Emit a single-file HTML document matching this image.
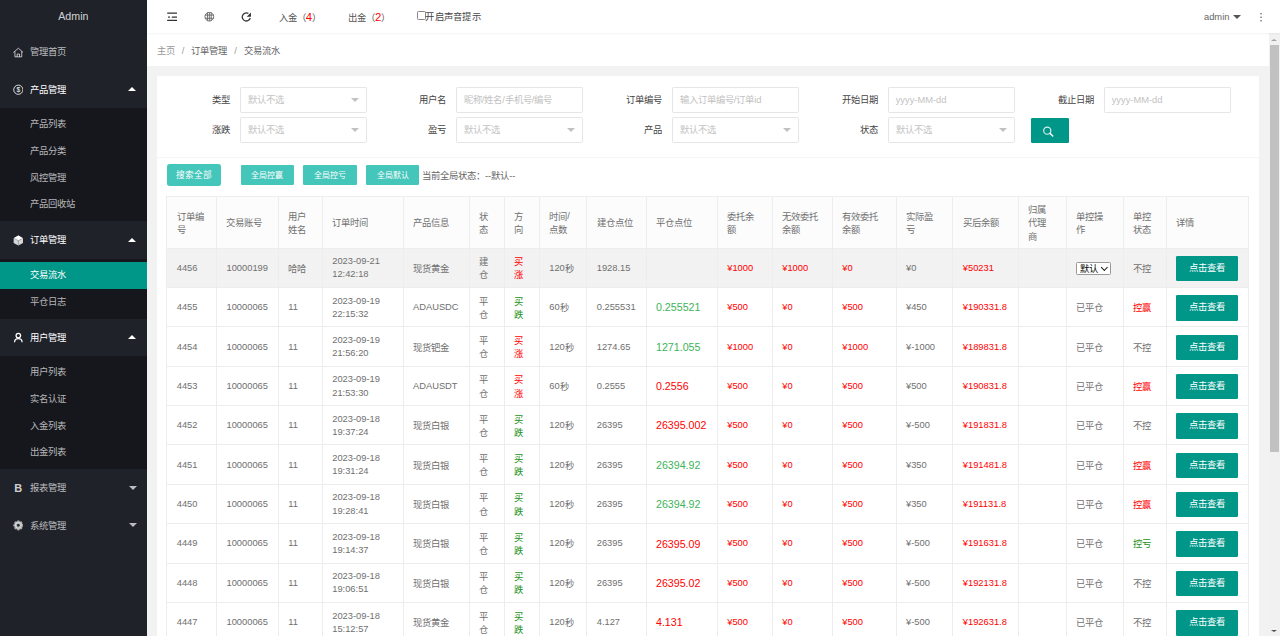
<!DOCTYPE html>
<html lang="zh-CN">
<head>
<meta charset="utf-8">
<title>Admin</title>
<style>
html,body{margin:0;padding:0;width:1280px;height:636px;overflow:hidden;background:#f2f2f2;}
*{box-sizing:border-box;}
#app{position:absolute;left:0;top:0;width:1920px;height:954px;zoom:0.6666667;overflow:hidden;
  font-family:"Liberation Sans",sans-serif;font-size:14px;color:#333;background:#f2f2f2;}
/* sidebar */
.side{position:absolute;left:0;top:0;width:220px;height:954px;background:#20222A;}
.logo{position:absolute;left:0;top:0;width:220px;height:50px;line-height:50px;text-align:center;font-size:16px;color:rgba(255,255,255,.8);}
.nav{position:absolute;left:0;top:50px;width:220px;}
.ni{position:relative;height:56px;line-height:58px;padding-left:45px;color:rgba(255,255,255,.7);font-size:14px;}
.ni.on{color:#fff;}
.ni .ic{position:absolute;left:19px;top:20.5px;width:16px;height:16px;}
.ni .more{position:absolute;right:16px;top:50%;width:0;height:0;border:6px solid transparent;}
.ni .more.up{border-bottom-color:#fff;margin-top:-9px;}
.ni .more.dn{border-top-color:rgba(255,255,255,.7);margin-top:-3px;right:14.5px;}
.child{background:rgba(0,0,0,.3);padding:5px 0;}
.dd{height:40px;line-height:41px;padding-left:45px;color:rgba(255,255,255,.7);font-size:14px;}
.dd.this{background:#009688;color:#fff;}
/* header */
.hdr{position:absolute;left:220px;top:0;width:1700px;height:50px;background:#fff;box-shadow:0 1px 2px 0 rgba(0,0,0,.05);z-index:2;}
.hic{position:absolute;top:18.5px;width:16px;height:16px;}
.htx{position:absolute;top:1.5px;line-height:50px;color:#555;font-size:14px;white-space:nowrap;}
.htx b{font-weight:normal;color:#f00;font-size:17px;}
.cbx{position:absolute;left:406px;top:16.5px;width:12.5px;height:13px;border:1px solid #888;border-radius:2px;background:#fff;}
/* breadcrumb */
.crumb{position:absolute;left:220px;top:50px;width:1683px;height:49.4px;background:#fff;line-height:50px;padding-top:2.5px;padding-left:15px;font-size:14px;}
.crumb .a1{color:#999;}
.crumb .sep{color:#999;margin:0 10.5px;}
.crumb .a2{color:#666;}
/* scrollbar */
.sb{position:absolute;left:1903px;top:50px;width:17px;height:904px;background:#f1f1f1;}
.sb .th{position:absolute;left:2px;top:17.5px;width:13px;height:610.5px;background:#c1c1c1;}
.sb .up{position:absolute;left:4px;top:8px;width:0;height:0;border:4.5px solid transparent;border-bottom:4px solid #a3a3a3;border-top:0;}
.sb .dn{position:absolute;left:4px;bottom:6px;width:0;height:0;border:4.5px solid transparent;border-top:4px solid #505050;border-bottom:0;}
/* card */
.card{position:absolute;left:235px;top:114.4px;width:1653px;height:900px;background:#fff;border-radius:2px;}
.hline{position:absolute;left:235px;top:236px;width:1653px;height:1px;background:#f6f6f6;}
.flab{position:absolute;width:110px;height:38px;line-height:38px;margin-top:1.5px;padding-right:15px;text-align:right;color:#444;font-size:14px;}
.finp{position:absolute;width:190px;height:38px;line-height:36px;border:1px solid #e6e6e6;border-radius:2px;background:#fff;padding-left:10px;color:#c2c2c2;font-size:14px;white-space:nowrap;overflow:hidden;}
.finp .edge{position:absolute;right:10px;top:50%;margin-top:-3px;width:0;height:0;border:6px solid transparent;border-top-color:#c2c2c2;border-bottom:0;}
.sbtn{position:absolute;left:1546px;top:177px;width:57px;height:38px;background:#009688;border-radius:2px;}
.tbtn{position:absolute;top:247.5px;height:30px;line-height:31.5px;background:#44c6bb;color:#fff;text-align:center;font-size:12px;border-radius:2px;}
.tbtn.big{top:246.5px;height:32px;line-height:33.5px;font-size:13px;border-radius:4px;}
.gstate{position:absolute;left:633px;top:249px;line-height:30px;font-size:14px;color:#666;white-space:nowrap;}
/* table */
table.lt{position:absolute;left:249.6px;top:293.35px;width:1621.95px;table-layout:fixed;border-collapse:collapse;border-spacing:0;background:#fff;color:#707070;font-size:14px;}
.lt th,.lt td{border:1px solid #ededed;padding:9.8px 16px 7.8px 14px;line-height:20px;min-height:20px;text-align:left;font-weight:normal;word-break:break-all;}
.lt thead tr{background:#fcfcfc;} .lt th{padding-top:9.8px;padding-bottom:6.8px;}
.lt td{word-break:normal;}
.lt tr.hov{background:#f2f2f2;}
.z{position:relative;top:1.5px;}
.vbtn .z,.sel .z{top:0;}
.cr{color:#f00;}
.cg{color:#1a921a;}
.clg{color:#3cb35a;}
.big{font-size:16px;position:relative;top:1px;}
.vbtn{display:inline-block;width:92px;height:38px;line-height:38px;text-align:center;color:#fff;background:#009688;border-radius:2px;font-size:14px;vertical-align:middle;}
.sel{display:inline-block;position:relative;width:53px;height:20px;line-height:18px;border:1px solid #9a9a9a;border-radius:2px;background:#fff;color:#000;font-size:14px;padding-left:4px;vertical-align:middle;}
.sel i{position:absolute;right:6px;top:3.5px;width:7px;height:7px;border-right:2.8px solid #111;border-bottom:2.8px solid #111;transform:rotate(45deg);}
</style>
</head>
<body>
<div id="app">
  <div class="side">
    <div class="logo">Admin</div>
    <div class="nav">
      <div class="ni">
        <svg class="ic" viewBox="0 0 16 16"><path d="M0.6 8.3 L8 1.9 L15.4 8.3 M2.9 6.6 V14.8 H13.1 V6.6 M6.2 14.8 V10.6 H9.8 V14.8" fill="none" stroke="rgba(255,255,255,.7)" stroke-width="1.5" stroke-linejoin="round"/></svg>
        管理首页</div>
      <div class="ni on">
        <svg class="ic" viewBox="0 0 16 16"><circle cx="8" cy="8.6" r="6.9" fill="none" stroke="rgba(255,255,255,.9)" stroke-width="1.4"/><text x="8" y="12.4" font-size="10" text-anchor="middle" fill="#fff" font-family="Liberation Sans">$</text></svg>
        产品管理<span class="more up"></span></div>
      <div class="child">
        <div class="dd">产品列表</div>
        <div class="dd">产品分类</div>
        <div class="dd">风控管理</div>
        <div class="dd">产品回收站</div>
      </div>
      <div class="ni on">
        <svg class="ic" viewBox="0 0 16 16"><path d="M8 0.9 L15 4.7 V12 L8 15.8 L1 12 V4.7 Z" fill="rgba(255,255,255,.82)"/><path d="M8 0.9 L15 4.7 L8 8.3 L1 4.7 Z" fill="#fff"/><path d="M1.5 5 L8 8.4 L14.5 5 M8 8.4 V15.5" fill="none" stroke="#20222A" stroke-width="0.8" stroke-opacity=".55"/></svg>
        订单管理<span class="more up"></span></div>
      <div class="child">
        <div class="dd this">交易流水</div>
        <div class="dd">平仓日志</div>
      </div>
      <div class="ni on">
        <svg class="ic" viewBox="0 0 16 16"><circle cx="8" cy="5.3" r="3.4" fill="none" stroke="#fff" stroke-width="1.9"/><path d="M2.4 14.6 Q2.8 10 8 10 Q13.2 10 13.6 14.6" fill="none" stroke="#fff" stroke-width="1.9" stroke-linecap="round"/></svg>
        用户管理<span class="more up"></span></div>
      <div class="child">
        <div class="dd">用户列表</div>
        <div class="dd">实名认证</div>
        <div class="dd">入金列表</div>
        <div class="dd">出金列表</div>
      </div>
      <div class="ni">
        <svg class="ic" viewBox="0 0 16 16"><text x="2" y="14.2" font-size="16.5" font-weight="bold" fill="rgba(255,255,255,.8)" font-family="Liberation Sans">B</text></svg>
        报表管理<span class="more dn"></span></div>
      <div class="ni">
        <svg class="ic" viewBox="0 0 16 16"><g fill="rgba(255,255,255,.6)"><circle cx="8" cy="8" r="5"/><circle cx="8" cy="2.6" r="2.3"/><circle cx="8" cy="13.4" r="2.3"/><circle cx="2.6" cy="8" r="2.3"/><circle cx="13.4" cy="8" r="2.3"/><circle cx="4.2" cy="4.2" r="2.3"/><circle cx="11.8" cy="4.2" r="2.3"/><circle cx="4.2" cy="11.8" r="2.3"/><circle cx="11.8" cy="11.8" r="2.3"/></g><circle cx="8" cy="8" r="1.9" fill="#20222A"/></svg>
        系统管理<span class="more dn"></span></div>
    </div>
  </div>

  <div class="hdr">
    <svg class="hic" style="left:30px" viewBox="0 0 16 16"><g fill="#333"><rect x="0.2" y="0.8" width="15.4" height="1.7" rx="0.8"/><rect x="7" y="6.8" width="8.6" height="1.7" rx="0.8"/><rect x="0.2" y="11.7" width="15.4" height="1.7" rx="0.3"/><circle cx="3" cy="7.6" r="1.35"/></g></svg>
    <svg class="hic" style="left:86px" viewBox="0 0 16 16"><g fill="none" stroke="#555" stroke-width="1.2"><circle cx="8" cy="7" r="6.6"/><path d="M1.6 4.6 H14.4 M1.6 9.4 H14.4 M5.2 1 V13 M8 0.6 V13.4 M10.8 1 V13"/></g></svg>
    <svg class="hic" style="left:142px" viewBox="0 0 16 16"><path d="M13.9 9.0 A6.1 6.1 0 1 1 11.05 2.1" fill="none" stroke="#333" stroke-width="1.9"/><path d="M14.9 0.9 V7.3 H8.5 Z" fill="#333"/></svg>
    <div class="htx" style="left:198px">入金（<b>4</b>）</div>
    <div class="htx" style="left:302px">出金（<b>2</b>）</div>
    <div class="cbx"></div>
    <div class="htx" style="left:418px;color:#444;letter-spacing:0.4px">开启声音提示</div>
    <div class="htx" style="left:1586px;color:#666">admin</div>
    <span style="position:absolute;left:1629px;top:22px;width:0;height:0;border:6px solid transparent;border-top:7px solid #555;border-bottom:0"></span>
    <svg style="position:absolute;left:1669px;top:18px" width="6" height="16" viewBox="0 0 6 16"><g fill="#555"><circle cx="3" cy="2.6" r="1.15"/><circle cx="3" cy="7.8" r="1.15"/><circle cx="3" cy="13.1" r="1.15"/></g></svg>
  </div>

  <div class="crumb"><span class="a1">主页</span><span class="sep">/</span><span class="a2">订单管理</span><span class="sep">/</span><span class="a2">交易流水</span></div>

  <div class="card"></div>
  <div class="flab" style="left:250px;top:131px">类型</div>
<div class="finp" style="left:360px;top:131px"><span>默认不选</span><i class="edge"></i></div>
<div class="flab" style="left:574px;top:131px">用户名</div>
<div class="finp" style="left:684px;top:131px"><span>昵称/姓名/手机号/编号</span></div>
<div class="flab" style="left:898px;top:131px">订单编号</div>
<div class="finp" style="left:1008px;top:131px"><span>输入订单编号/订单id</span></div>
<div class="flab" style="left:1222px;top:131px">开始日期</div>
<div class="finp" style="left:1332px;top:131px"><span>yyyy-MM-dd</span></div>
<div class="flab" style="left:1546px;top:131px">截止日期</div>
<div class="finp" style="left:1656px;top:131px"><span>yyyy-MM-dd</span></div>
<div class="flab" style="left:250px;top:176px">涨跌</div>
<div class="finp" style="left:360px;top:176px"><span>默认不选</span><i class="edge"></i></div>
<div class="flab" style="left:574px;top:176px">盈亏</div>
<div class="finp" style="left:684px;top:176px"><span>默认不选</span><i class="edge"></i></div>
<div class="flab" style="left:898px;top:176px">产品</div>
<div class="finp" style="left:1008px;top:176px"><span>默认不选</span><i class="edge"></i></div>
<div class="flab" style="left:1222px;top:176px">状态</div>
<div class="finp" style="left:1332px;top:176px"><span>默认不选</span><i class="edge"></i></div>
  <div class="sbtn"><svg style="position:absolute;left:19px;top:10px" width="19" height="19" viewBox="0 0 19 19"><circle cx="6.4" cy="8.45" r="5.4" fill="none" stroke="rgba(255,255,255,.85)" stroke-width="1.8"/><path d="M10.6 12.6 L14.6 16.6" stroke="rgba(255,255,255,.9)" stroke-width="2.4" stroke-linecap="round"/></svg></div>
  <div class="hline"></div>
  <div class="tbtn big" style="left:250px;width:82px">搜索全部</div>
  <div class="tbtn" style="left:361px;width:80px">全局控赢</div>
  <div class="tbtn" style="left:455px;width:80px">全局控亏</div>
  <div class="tbtn" style="left:549px;width:80px">全局默认</div>
  <div class="gstate">当前全局状态：--默认--</div>

  <table class="lt">
    <colgroup><col style="width:74.625px"><col style="width:92.625px"><col style="width:66.000px"><col style="width:121.125px"><col style="width:99.375px"><col style="width:52.500px"><col style="width:52.500px"><col style="width:71.250px"><col style="width:88.875px"><col style="width:106.875px"><col style="width:82.500px"><col style="width:90.000px"><col style="width:95.625px"><col style="width:85.200px"><col style="width:98.025px"><col style="width:71.850px"><col style="width:85.350px"><col style="width:65.250px"><col style="width:122.400px"></colgroup>
    <thead><tr><th><span class="z">订单编号</span></th><th><span class="z">交易账号</span></th><th><span class="z">用户姓名</span></th><th><span class="z">订单时间</span></th><th><span class="z">产品信息</span></th><th><span class="z">状态</span></th><th><span class="z">方向</span></th><th><span class="z">时间</span>/<span class="z">点数</span></th><th><span class="z">建仓点位</span></th><th><span class="z">平仓点位</span></th><th><span class="z">委托余额</span></th><th><span class="z">无效委托余额</span></th><th><span class="z">有效委托余额</span></th><th><span class="z">实际盈亏</span></th><th><span class="z">买后余额</span></th><th><span class="z">归属代理商</span></th><th><span class="z">单控操作</span></th><th><span class="z">单控状态</span></th><th><span class="z">详情</span></th></tr></thead>
    <tbody>
<tr class="hov"><td>4456</td><td>10000199</td><td><span class="z">哈哈</span></td><td>2023-09-21 12:42:18</td><td><span class="z">现货黄金</span></td><td><span class="z">建仓</span></td><td><span class="cr"><span class="z">买涨</span></span></td><td>120<span class="z">秒</span></td><td>1928.15</td><td></td><td><span class="cr">¥1000</span></td><td><span class="cr">¥1000</span></td><td><span class="cr">¥0</span></td><td>¥0</td><td><span class="cr">¥50231</span></td><td></td><td><span class="sel"><span class="z">默认</span><i></i></span></td><td><span class="z">不控</span></td><td><a class="vbtn"><span class="z">点击查看</span></a></td></tr>
<tr><td>4455</td><td>10000065</td><td>11</td><td>2023-09-19 22:15:32</td><td>ADAUSDC</td><td><span class="z">平仓</span></td><td><span class="cg"><span class="z">买跌</span></span></td><td>60<span class="z">秒</span></td><td>0.255531</td><td><span class="big clg">0.255521</span></td><td><span class="cr">¥500</span></td><td><span class="cr">¥0</span></td><td><span class="cr">¥500</span></td><td>¥450</td><td><span class="cr">¥190331.8</span></td><td></td><td><span class="z">已平仓</span></td><td><span class="cr"><span class="z">控赢</span></span></td><td><a class="vbtn"><span class="z">点击查看</span></a></td></tr>
<tr><td>4454</td><td>10000065</td><td>11</td><td>2023-09-19 21:56:20</td><td><span class="z">现货钯金</span></td><td><span class="z">平仓</span></td><td><span class="cr"><span class="z">买涨</span></span></td><td>120<span class="z">秒</span></td><td>1274.65</td><td><span class="big clg">1271.055</span></td><td><span class="cr">¥1000</span></td><td><span class="cr">¥0</span></td><td><span class="cr">¥1000</span></td><td>¥-1000</td><td><span class="cr">¥189831.8</span></td><td></td><td><span class="z">已平仓</span></td><td><span class="z">不控</span></td><td><a class="vbtn"><span class="z">点击查看</span></a></td></tr>
<tr><td>4453</td><td>10000065</td><td>11</td><td>2023-09-19 21:53:30</td><td>ADAUSDT</td><td><span class="z">平仓</span></td><td><span class="cr"><span class="z">买涨</span></span></td><td>60<span class="z">秒</span></td><td>0.2555</td><td><span class="big cr">0.2556</span></td><td><span class="cr">¥500</span></td><td><span class="cr">¥0</span></td><td><span class="cr">¥500</span></td><td>¥500</td><td><span class="cr">¥190831.8</span></td><td></td><td><span class="z">已平仓</span></td><td><span class="cr"><span class="z">控赢</span></span></td><td><a class="vbtn"><span class="z">点击查看</span></a></td></tr>
<tr><td>4452</td><td>10000065</td><td>11</td><td>2023-09-18 19:37:24</td><td><span class="z">现货白银</span></td><td><span class="z">平仓</span></td><td><span class="cg"><span class="z">买跌</span></span></td><td>120<span class="z">秒</span></td><td>26395</td><td><span class="big cr">26395.002</span></td><td><span class="cr">¥500</span></td><td><span class="cr">¥0</span></td><td><span class="cr">¥500</span></td><td>¥-500</td><td><span class="cr">¥191831.8</span></td><td></td><td><span class="z">已平仓</span></td><td><span class="z">不控</span></td><td><a class="vbtn"><span class="z">点击查看</span></a></td></tr>
<tr><td>4451</td><td>10000065</td><td>11</td><td>2023-09-18 19:31:24</td><td><span class="z">现货白银</span></td><td><span class="z">平仓</span></td><td><span class="cg"><span class="z">买跌</span></span></td><td>120<span class="z">秒</span></td><td>26395</td><td><span class="big clg">26394.92</span></td><td><span class="cr">¥500</span></td><td><span class="cr">¥0</span></td><td><span class="cr">¥500</span></td><td>¥350</td><td><span class="cr">¥191481.8</span></td><td></td><td><span class="z">已平仓</span></td><td><span class="cr"><span class="z">控赢</span></span></td><td><a class="vbtn"><span class="z">点击查看</span></a></td></tr>
<tr><td>4450</td><td>10000065</td><td>11</td><td>2023-09-18 19:28:41</td><td><span class="z">现货白银</span></td><td><span class="z">平仓</span></td><td><span class="cg"><span class="z">买跌</span></span></td><td>120<span class="z">秒</span></td><td>26395</td><td><span class="big clg">26394.92</span></td><td><span class="cr">¥500</span></td><td><span class="cr">¥0</span></td><td><span class="cr">¥500</span></td><td>¥350</td><td><span class="cr">¥191131.8</span></td><td></td><td><span class="z">已平仓</span></td><td><span class="cr"><span class="z">控赢</span></span></td><td><a class="vbtn"><span class="z">点击查看</span></a></td></tr>
<tr><td>4449</td><td>10000065</td><td>11</td><td>2023-09-18 19:14:37</td><td><span class="z">现货白银</span></td><td><span class="z">平仓</span></td><td><span class="cg"><span class="z">买跌</span></span></td><td>120<span class="z">秒</span></td><td>26395</td><td><span class="big cr">26395.09</span></td><td><span class="cr">¥500</span></td><td><span class="cr">¥0</span></td><td><span class="cr">¥500</span></td><td>¥-500</td><td><span class="cr">¥191631.8</span></td><td></td><td><span class="z">已平仓</span></td><td><span class="cg"><span class="z">控亏</span></span></td><td><a class="vbtn"><span class="z">点击查看</span></a></td></tr>
<tr><td>4448</td><td>10000065</td><td>11</td><td>2023-09-18 19:06:51</td><td><span class="z">现货白银</span></td><td><span class="z">平仓</span></td><td><span class="cg"><span class="z">买跌</span></span></td><td>120<span class="z">秒</span></td><td>26395</td><td><span class="big cr">26395.02</span></td><td><span class="cr">¥500</span></td><td><span class="cr">¥0</span></td><td><span class="cr">¥500</span></td><td>¥-500</td><td><span class="cr">¥192131.8</span></td><td></td><td><span class="z">已平仓</span></td><td><span class="z">不控</span></td><td><a class="vbtn"><span class="z">点击查看</span></a></td></tr>
<tr><td>4447</td><td>10000065</td><td>11</td><td>2023-09-18 15:12:57</td><td><span class="z">现货黄金</span></td><td><span class="z">平仓</span></td><td><span class="cg"><span class="z">买跌</span></span></td><td>120<span class="z">秒</span></td><td>4.127</td><td><span class="big cr">4.131</span></td><td><span class="cr">¥500</span></td><td><span class="cr">¥0</span></td><td><span class="cr">¥500</span></td><td>¥-500</td><td><span class="cr">¥192631.8</span></td><td></td><td><span class="z">已平仓</span></td><td><span class="z">不控</span></td><td><a class="vbtn"><span class="z">点击查看</span></a></td></tr>
    </tbody>
  </table>

  <div class="sb"><span class="up"></span><div class="th"></div><span class="dn"></span></div>
</div>
</body>
</html>
